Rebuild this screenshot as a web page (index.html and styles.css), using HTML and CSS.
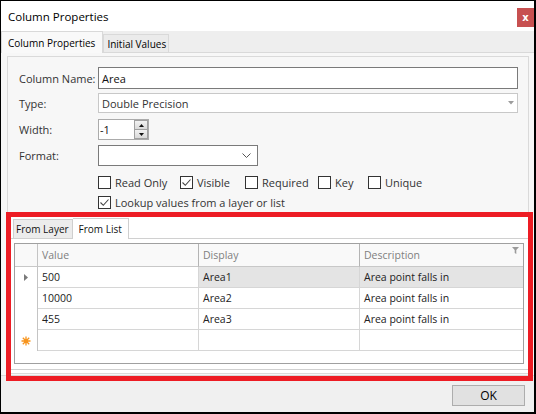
FILE: index.html
```html
<!DOCTYPE html>
<html>
<head>
<meta charset="utf-8">
<link rel="stylesheet" href="styles.css">
</head>
<body>
<div class="window">
  <div class="titlebar">
    <span class="title">Column Properties</span>
    <div class="close">x</div>
  </div>
  <div class="tabs">
    <div class="tab active">Column Properties</div>
    <div class="tab">Initial Values</div>
  </div>
  <div class="page">
    <div class="group">
      <div class="form">
        <div class="row r-name">
          <label>Column Name:</label>
          <div class="textbox">Area</div>
        </div>
        <div class="row r-type">
          <label>Type:</label>
          <div class="combo light"><span>Double Precision</span>
            <svg width="6" height="4" viewBox="0 0 6 4"><path d="M0 0H6L3 3.5Z" fill="#9c9c9c"/></svg>
          </div>
        </div>
        <div class="row r-width">
          <label>Width:</label>
          <div class="spin"><span>-1</span>
            <div class="spinbtns">
              <div class="sb"><svg width="5" height="3" viewBox="0 0 5 3"><path d="M2.5 0L5 3H0Z" fill="#111"/></svg></div>
              <div class="sb"><svg width="5" height="3" viewBox="0 0 5 3"><path d="M0 0H5L2.5 3Z" fill="#111"/></svg></div>
            </div>
          </div>
        </div>
        <div class="row r-format">
          <label>Format:</label>
          <div class="combo short">
            <span></span>
            <svg width="9" height="5" viewBox="0 0 9 5"><path d="M0.5 0.5L4.5 4.5L8.5 0.5" fill="none" stroke="#555" stroke-width="1"/></svg>
          </div>
        </div>
        <div class="checks">
          <div class="chk"><span class="box"></span>Read Only</div>
          <div class="chk"><span class="box"><svg width="11" height="11" viewBox="0 0 11 11"><path d="M1.5 5.5L4.3 8.3L9.5 2.5" fill="none" stroke="#444" stroke-width="1.1"/></svg></span>Visible</div>
          <div class="chk"><span class="box"></span>Required</div>
          <div class="chk"><span class="box"></span>Key</div>
          <div class="chk"><span class="box"></span>Unique</div>
        </div>
        <div class="checks second">
          <div class="chk"><span class="box"><svg width="11" height="11" viewBox="0 0 11 11"><path d="M1.5 5.5L4.3 8.3L9.5 2.5" fill="none" stroke="#444" stroke-width="1.1"/></svg></span>Lookup values from a layer or list</div>
        </div>
      </div>
      <div class="lookup">
        <div class="subtabs">
          <div class="subtab">From Layer</div>
          <div class="subtab active">From List</div>
        </div>
        <div class="subpage">
          <div class="grid">
            <div class="c h ind"></div>
            <div class="c h">Value</div>
            <div class="c h">Display</div>
            <div class="c h last desc"><span>Description</span>
              <svg width="7" height="7" viewBox="0 0 7 7"><path d="M0 0H7L4.3 3V7L2.7 6V3Z" fill="#9a9a9a"/></svg>
            </div>

            <div class="c ind"><svg width="4" height="7" viewBox="0 0 4 7"><path d="M0 0L4 3.5L0 7Z" fill="#7a7a7a"/></svg></div>
            <div class="c">500</div>
            <div class="c sel">Area1</div>
            <div class="c sel last">Area point falls in</div>

            <div class="c ind"></div>
            <div class="c">10000</div>
            <div class="c">Area2</div>
            <div class="c last">Area point falls in</div>

            <div class="c ind"></div>
            <div class="c">455</div>
            <div class="c">Area3</div>
            <div class="c last">Area point falls in</div>

            <div class="c ind"><svg width="10" height="10" viewBox="0 0 10 10"><g stroke="#f7941d" stroke-width="1.3"><path d="M5 0.5V9.5M0.5 5H9.5M1.8 1.8L8.2 8.2M8.2 1.8L1.8 8.2"/></g><circle cx="5" cy="5" r="2.2" fill="#f7941d"/></svg></div>
            <div class="c"></div>
            <div class="c"></div>
            <div class="c last"></div>
          </div>
        </div>
      </div>
    </div>
  </div>
  <div class="footer">
    <button class="ok">OK</button>
  </div>
  <div class="highlight"></div>
</div>
</body>
</html>
```

FILE: styles.css
```css
body {
  margin: 0;
  background: #fff;
  font-family: "Open Sans", "Noto Sans", sans-serif;
  font-size: 11px;
  color: #222;
}

.window {
  position: relative;
  width: 536px;
  height: 414px;
  box-sizing: border-box;
  border: solid #000;
  border-width: 1px 2px 2px 1px;
  display: flex;
  flex-direction: column;
  background: #fff;
}

.titlebar {
  height: 30px;
  flex: none;
  display: flex;
  align-items: center;
  background: #fff;
}

.title {
  margin-left: 7px;
  font-size: 11.5px;
  color: #000;
}

.close {
  margin-left: auto;
  align-self: flex-start;
  margin-top: 7px;
  width: 17px;
  height: 19px;
  background: #c75050;
  color: #fff;
  font: bold 10px "DejaVu Sans", sans-serif;
  display: flex;
  align-items: center;
  justify-content: center;
}

.tabs {
  height: 21px;
  flex: none;
  background: #eeeeee;
  display: flex;
  align-items: flex-end;
}

.tab {
  height: 18px;
  box-sizing: border-box;
  border: 1px solid #d9d9d9;
  border-bottom: none;
  background: #ebebeb;
  padding: 0 2px 0 3px;
  display: flex;
  align-items: center;
  font-size: 10px;
  color: #000;
}

.tab.active {
  height: 22px;
  margin-bottom: -1px;
  background: #f9f9f9;
  position: relative;
  z-index: 1;
  padding: 0 7px 0 6px;
}

.page {
  height: 324px;
  flex: none;
  box-sizing: border-box;
  background: #f7f7f7;
  border-top: 1px solid #d9d9d9;
  border-bottom: 1px solid #d9d9d9;
  padding: 3px 5px 0 6px;
}

.group {
  height: 318px;
  box-sizing: border-box;
  border: 1px solid #dadada;
  display: flex;
  flex-direction: column;
}

.form {
  padding: 10px 0 0 11px;
}

.row {
  display: flex;
  align-items: center;
}

.row label {
  width: 79px;
  flex: none;
  color: #333;
}

.r-type { margin-top: 4px; }
.r-width { margin-top: 6px; }
.r-format { margin-top: 5px; }

.textbox {
  width: 420px;
  height: 22px;
  box-sizing: border-box;
  border: 1px solid #7a7a7a;
  background: #fff;
  padding-left: 3px;
  display: flex;
  align-items: center;
  color: #111;
}

.combo {
  width: 420px;
  height: 21px;
  box-sizing: border-box;
  border: 1px solid #7a7a7a;
  background: #fff;
  padding: 0 6px 0 3px;
  display: flex;
  align-items: center;
  justify-content: space-between;
  color: #333;
}

.combo.light {
  height: 20px;
  border-color: #c8c8c8;
  padding-right: 3px;
}

.combo.short {
  width: 160px;
}

.spin {
  width: 51px;
  height: 21px;
  box-sizing: border-box;
  border: 1px solid #ababab;
  background: #fff;
  padding-left: 1px;
  display: flex;
  align-items: center;
  color: #111;
}

.spinbtns {
  margin-left: auto;
  width: 14px;
  height: 19px;
  display: flex;
  flex-direction: column;
}

.sb {
  flex: 1;
  box-sizing: border-box;
  border: 1px solid #a0a0a0;
  background: linear-gradient(#f2f2f2, #d9d9d9);
  display: flex;
  align-items: center;
  justify-content: center;
}

.sb + .sb {
  border-top: none;
}

.checks {
  display: grid;
  grid-template-columns: 82px 65px 73px 50px auto;
  margin: 9px 0 0 79px;
  height: 13px;
  align-items: center;
}

.checks.second {
  margin-top: 7px;
  grid-template-columns: auto;
}

.chk {
  display: flex;
  align-items: center;
  color: #333;
  white-space: nowrap;
}

.box {
  width: 13px;
  height: 13px;
  box-sizing: border-box;
  border: 1px solid #333;
  background: #fff;
  margin-right: 4px;
  flex: none;
  display: flex;
}

.lookup {
  flex: 1;
  margin-top: 4px;
  background: #fff;
  display: flex;
  flex-direction: column;
}

.subtabs {
  height: 26px;
  flex: none;
  display: flex;
  align-items: flex-end;
  padding-left: 5px;
}

.subtab {
  height: 19px;
  box-sizing: border-box;
  border: 1px solid #cfcfcf;
  border-bottom: none;
  background: #ececec;
  padding: 0 3px 0 2px;
  display: flex;
  align-items: center;
  font-size: 10px;
  color: #111;
}

.subtab.active {
  height: 21px;
  margin-bottom: -1px;
  background: #fff;
  border-left: none;
  padding: 0 6px 0 6px;
  position: relative;
  z-index: 1;
}

.subpage {
  border-top: 1px solid #d0d0d0;
  border-bottom: 1px solid #d0d0d0;
  padding: 4px 4px 5px 6px;
}

.grid {
  height: 121px;
  box-sizing: border-box;
  border: 1px solid #a0a0a0;
  display: grid;
  grid-template-columns: 23px 161px 161px 163px;
  grid-template-rows: 23px repeat(4, 21px);
  align-content: start;
  font-size: 10.5px;
}

.c {
  box-sizing: border-box;
  border-right: 1px solid #d6d6d6;
  border-bottom: 1px solid #d6d6d6;
  padding-left: 4px;
  display: flex;
  align-items: center;
  color: #222;
  background: #fff;
}

.c.h {
  background: #f9f9f9;
  color: #7f7f7f;
  border-bottom-color: #c8c8c8;
  border-right-color: #b4b4b4;
}

.c.ind {
  border-bottom: none;
  border-right-color: #c4c4c4;
  justify-content: center;
  padding: 0;
}

.c.h.ind {
  border-bottom: 1px solid #c8c8c8;
}

.c.last {
  border-right: none;
}

.c.desc {
  justify-content: space-between;
  align-items: flex-start;
  padding-right: 4px;
}

.c.desc span {
  align-self: center;
}

.c.desc svg {
  margin-top: 3px;
}

.c.sel {
  background: #e4e4e4;
}

.footer {
  flex: 1;
  background: #f0f0f0;
  display: flex;
  justify-content: flex-end;
  align-items: flex-start;
  padding: 9px 9px 0 0;
}

.ok {
  width: 73px;
  height: 21px;
  box-sizing: border-box;
  border: 1px solid #adadad;
  background: #e1e1e1;
  font-family: "Open Sans", "Noto Sans", sans-serif;
  font-size: 12px;
  color: #000;
  padding: 0;
}

.highlight {
  position: absolute;
  left: 5px;
  top: 211px;
  width: 527px;
  height: 169px;
  box-sizing: border-box;
  border: 5px solid #ed1c24;
  pointer-events: none;
}
```
